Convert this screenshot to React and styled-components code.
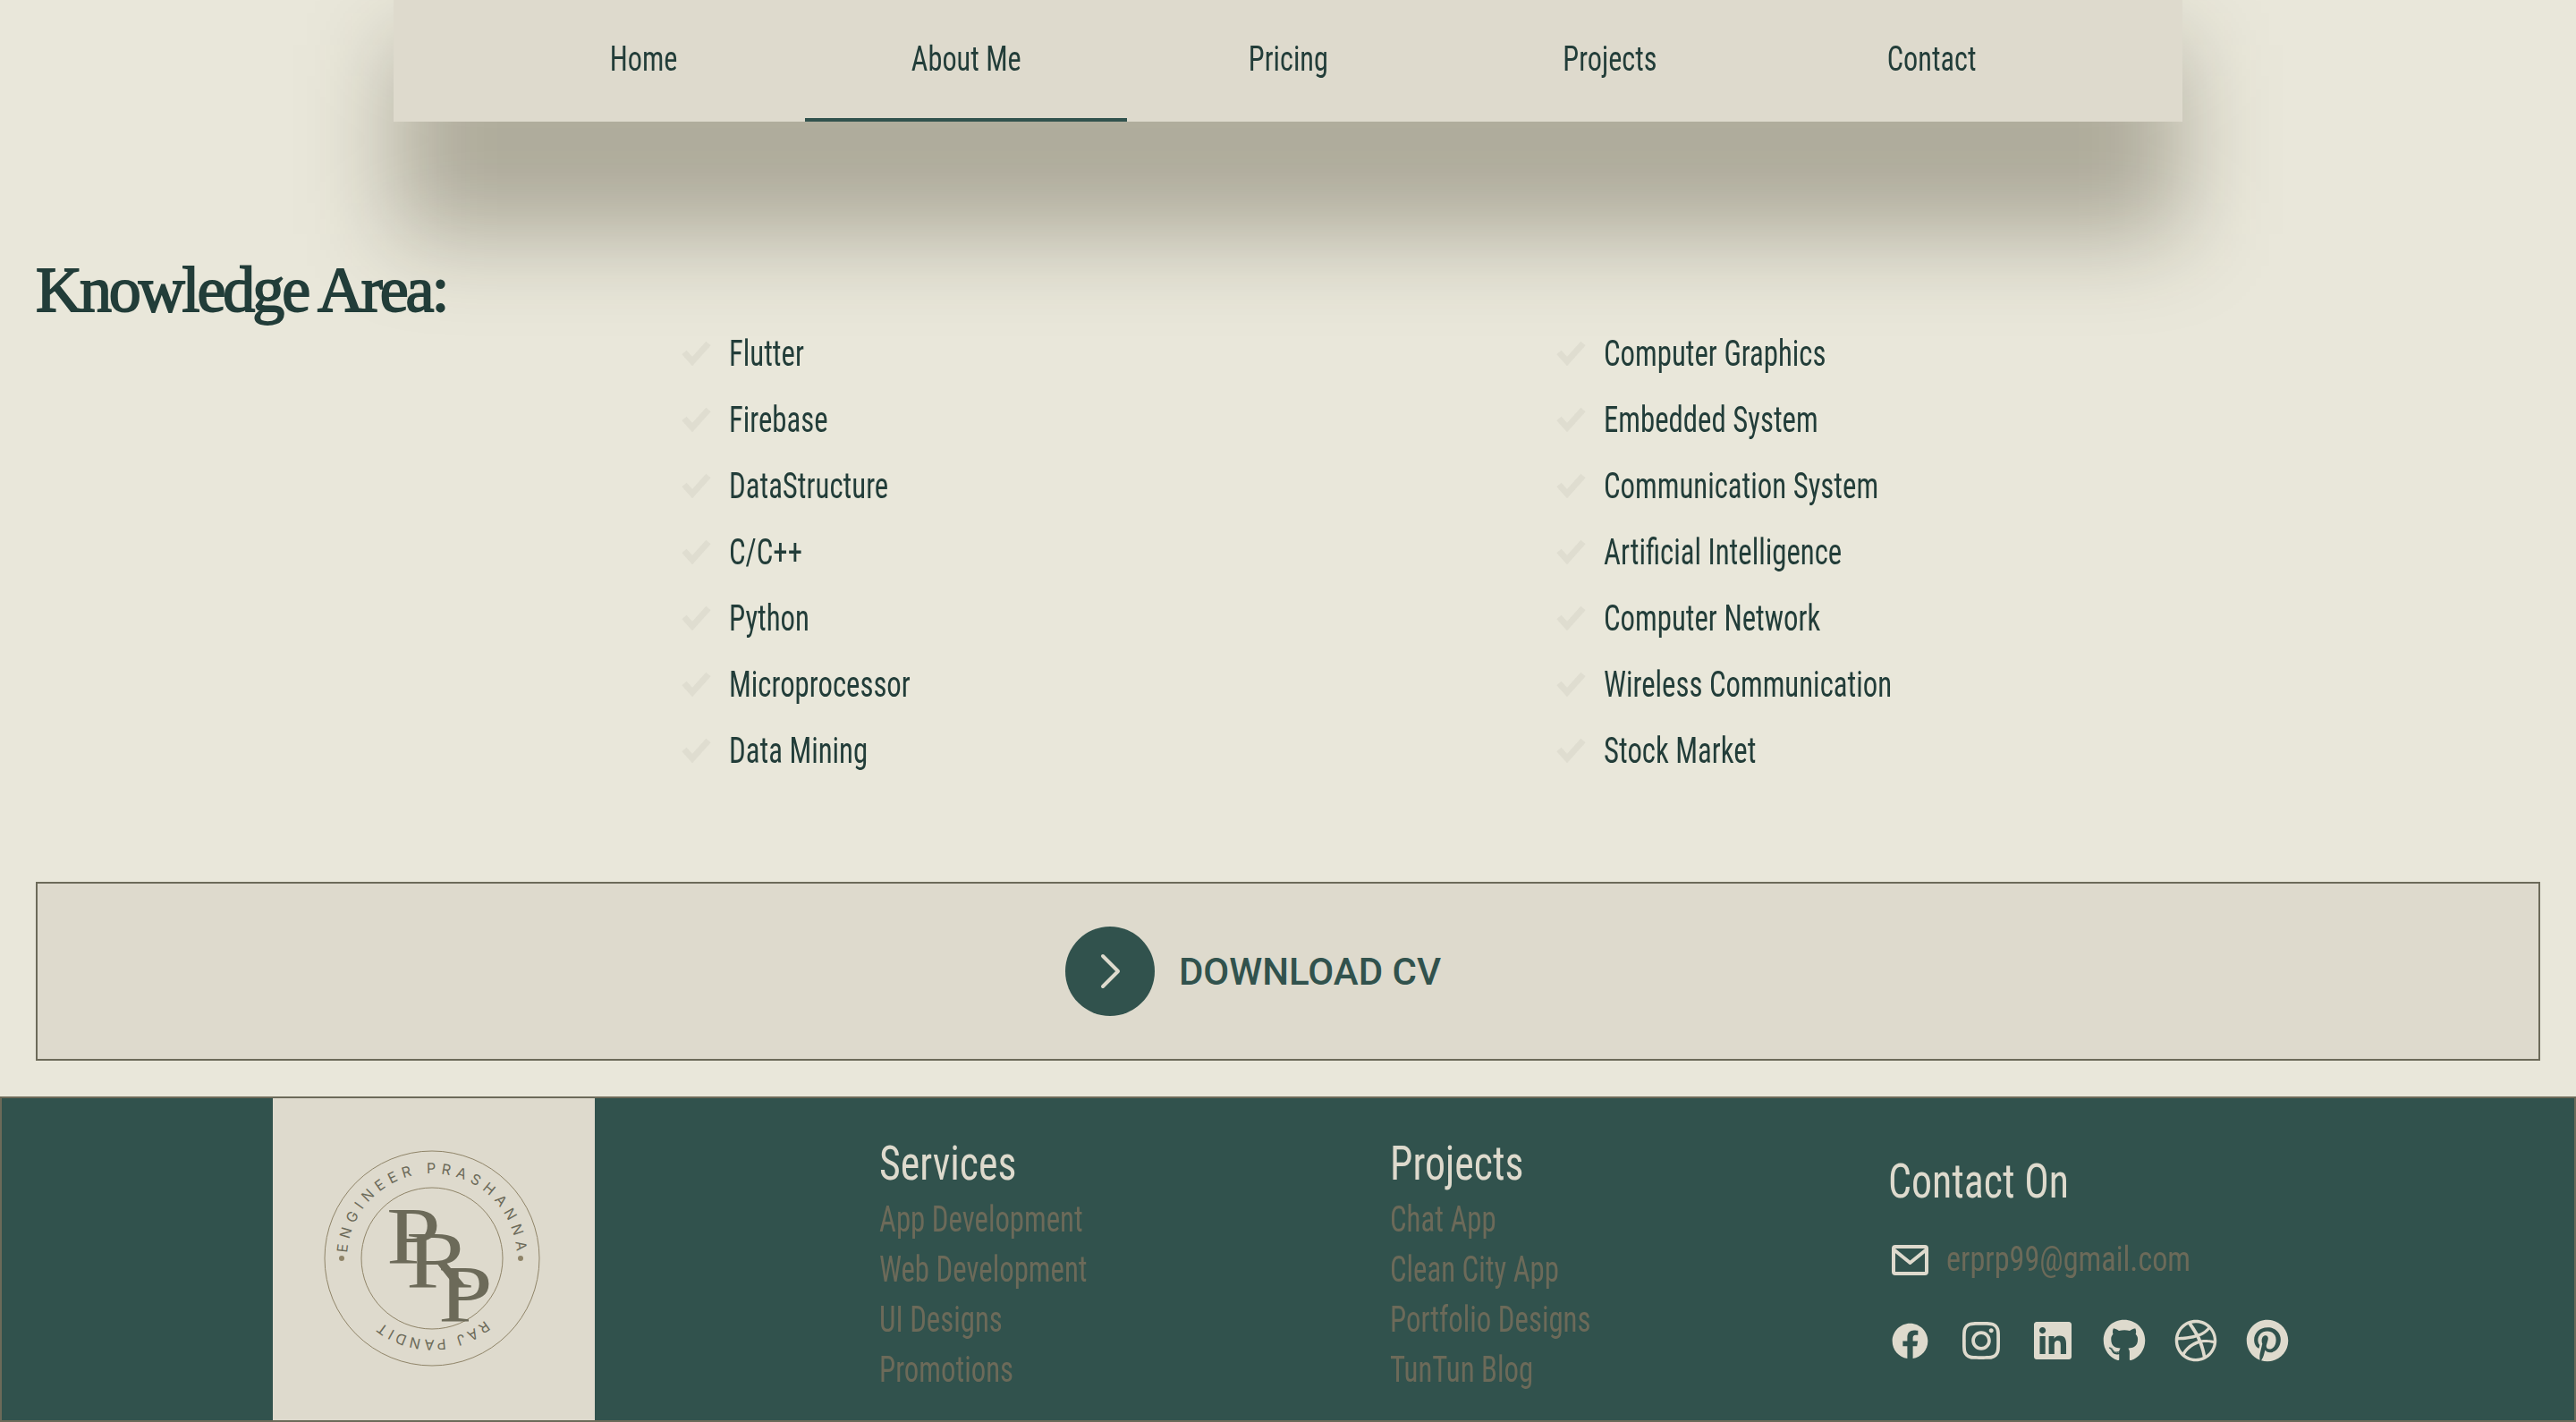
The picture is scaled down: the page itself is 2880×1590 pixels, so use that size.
import styled, { createGlobalStyle } from "styled-components";
import { FaFacebook, FaInstagram, FaLinkedin, FaGithub, FaDribbble, FaPinterest } from "react-icons/fa";

const NAV = ["Home", "About Me", "Pricing", "Projects", "Contact"];
const LEFT = ["Flutter", "Firebase", "DataStructure", "C/C++", "Python", "Microprocessor", "Data Mining"];
const RIGHT = ["Computer Graphics", "Embedded System", "Communication System", "Artificial Intelligence", "Computer Network", "Wireless Communication", "Stock Market"];
const SERVICES = ["App Development", "Web Development", "UI Designs", "Promotions"];
const PROJECTS = ["Chat App", "Clean City App", "Portfolio Designs", "TunTun Blog"];

const Global = createGlobalStyle`
  html { background: #e9e7da; }
  body { margin: 0; font-family: Roboto, sans-serif; font-stretch: 75%; overflow: hidden; }
`;

const Page = styled.div`
  width: 2880px;
  height: 1590px;
  overflow: hidden;
`;

// narrows the condensed face a little more, there is no Oswald here
const Narrow = styled.span`
  display: inline-block;
  white-space: nowrap;
  transform: scaleX(${(p) => p.$x || 0.86});
  transform-origin: ${(p) => p.$origin || "left"} center;
`;

const Nav = styled.nav`
  position: relative;
  display: flex;
  width: 2000px;
  height: 136px;
  margin: 0 auto 144px;
  padding: 0 100px;
  box-sizing: border-box;
  background: #dedacd;

  &::before {
    content: "";
    position: absolute;
    z-index: -1;
    left: 2px;
    right: 2px;
    top: 50px;
    height: 212px;
    background: rgba(36, 31, 5, 0.3);
    filter: blur(52px);
  }
`;

const NavItem = styled.a`
  display: flex;
  align-items: center;
  justify-content: center;
  width: 360px;
  height: 132px;
  font-size: 38px;
  color: #223d39;
  border-bottom: 4px solid ${(p) => (p.$active ? "#31524d" : "transparent")};
`;

const Heading = styled.h2`
  margin: 0 0 -5px 40px;
  height: 78px;
  padding-top: 5px;
  font-family: "Liberation Serif", serif;
  font-stretch: normal;
  font-weight: 400;
  font-size: 72px;
  line-height: 78px;
  letter-spacing: -3.1px;
  -webkit-text-stroke: 1.8px #223d39;
  color: #223d39;
`;

const Lists = styled.div`
  display: grid;
  grid-template-columns: 978px 1fr;
  padding-left: 762px;
  margin-bottom: 110px;
`;

const Row = styled.div`
  display: flex;
  align-items: center;
  gap: 20px;
  height: 74px;
  font-size: 40px;
  color: #223d39;
  svg { width: 33px; height: 28px; color: #dfddd0; flex: none; }
`;

const Download = styled.a`
  display: flex;
  align-items: center;
  justify-content: center;
  gap: 27px;
  height: 200px;
  margin: 0 40px 40px;
  padding-right: 78px;
  box-sizing: border-box;
  background: #dedacd;
  border: 2px solid #6c6a59;
  font-stretch: normal;
  font-weight: 500;
  font-size: 42px;
  color: #31524d;
`;

const Circle = styled.span`
  display: flex;
  align-items: center;
  justify-content: center;
  width: 100px;
  height: 100px;
  border-radius: 50%;
  background: #31524d;
`;

const Footer = styled.footer`
  display: flex;
  height: 364px;
  box-sizing: border-box;
  padding-left: 303px;
  background: #31524d;
  border: 2px solid #6c6a59;
`;

const LogoCol = styled.div`
  width: 678px;
  flex: none;
`;

const LogoBox = styled.div`
  width: 360px;
  height: 360px;
  background: #dedacd;
`;

const Col = styled.div`
  width: ${(p) => p.$w}px;
  flex: none;
  padding-top: 42px;
`;

const ColTitle = styled.div`
  height: 62px;
  margin-bottom: 4px;
  font-size: 54px;
  line-height: 62px;
  color: #dedacd;
`;

const ColLink = styled.div`
  height: 56px;
  font-size: 40px;
  line-height: 56px;
  color: #6c6a59;
`;

const ContactCol = styled.div`
  padding-top: 62px;
`;

const Mail = styled.div`
  display: flex;
  align-items: center;
  gap: 17px;
  height: 48px;
  margin-top: 32px;
  font-size: 38px;
  color: #6c6a59;
`;

const Socials = styled.div`
  display: flex;
  gap: 32px;
  margin-top: 43px;
  color: #dedacd;
`;

const Social = styled.span`
  display: flex;
  align-items: center;
  justify-content: center;
  width: 48px;
  height: 48px;
`;

const logoText = { fontFamily: "Inter, sans-serif", fontSize: 16, fill: "#6c6a59" };
const prpText = { fontFamily: "Liberation Serif, serif", fontSize: 91, fill: "#6c6a59" };

function Logo() {
  return (
    <svg width="360" height="360" viewBox="0 0 360 360">
      <defs>
        <path id="topArc" d="M 83 179 A 95 95 0 0 1 273 179" />
        <path id="botArc" d="M 269 179 A 91 91 0 0 1 87 179" />
      </defs>
      <circle cx="178" cy="179" r="120" fill="none" stroke="#8f8468" strokeWidth="1" />
      <circle cx="178" cy="179" r="79" fill="none" stroke="#8f8468" strokeWidth="1" />
      <circle cx="77" cy="179" r="3" fill="#8f8468" />
      <circle cx="277" cy="179" r="3" fill="#8f8468" />
      <text style={logoText}><textPath href="#topArc" startOffset="6" textLength="284">ENGINEER PRASHANNA</textPath></text>
      <text style={logoText} letterSpacing="3.5"><textPath href="#botArc" startOffset="50%" textAnchor="middle">RAJ PANDIT</textPath></text>
      <text transform="translate(127 185) scale(1.2 1)" style={prpText}>P</text>
      <text transform="translate(149 212) scale(1.2 1)" style={prpText}>R</text>
      <text transform="translate(185 250) scale(1.2 1)" style={prpText}>P</text>
    </svg>
  );
}

export default function App() {
  return (
    <Page>
      <Global />
      <Nav>
        {NAV.map((n) => (
          <NavItem key={n} $active={n === "About Me"}><Narrow $origin="center" $x={0.85}>{n}</Narrow></NavItem>
        ))}
      </Nav>
      <Heading>Knowledge Area:</Heading>
      <Lists>
        {[LEFT, RIGHT].map((list, i) => (
          <div key={i}>
            {list.map((t) => (
              <Row key={t}>
                <svg viewBox="0 0 33 28"><path d="M3 13 L12 23 L30 3" fill="none" stroke="currentColor" strokeWidth="7" /></svg>
                <Narrow $x={0.82}>{t}</Narrow>
              </Row>
            ))}
          </div>
        ))}
      </Lists>
      <Download>
        <Circle>
          <svg width="40" height="50" viewBox="0 0 40 50"><path d="M12 8 L29 25 L12 42" fill="none" stroke="#dedacd" strokeWidth="4" strokeLinecap="round" strokeLinejoin="round" /></svg>
        </Circle>
        DOWNLOAD CV
      </Download>
      <Footer>
        <LogoCol><LogoBox><Logo /></LogoBox></LogoCol>
        <Col $w={571}>
          <ColTitle><Narrow $x={0.85}>Services</Narrow></ColTitle>
          {SERVICES.map((s) => <ColLink key={s}><Narrow $x={0.82}>{s}</Narrow></ColLink>)}
        </Col>
        <Col $w={557}>
          <ColTitle><Narrow $x={0.85}>Projects</Narrow></ColTitle>
          {PROJECTS.map((s) => <ColLink key={s}><Narrow $x={0.82}>{s}</Narrow></ColLink>)}
        </Col>
        <ContactCol>
          <ColTitle><Narrow $x={0.85}>Contact On</Narrow></ColTitle>
          <Mail>
            <svg width="48" height="48" viewBox="0 0 48 48" fill="none" stroke="#dedacd" strokeWidth="4" strokeLinejoin="round">
              <rect x="6" y="10" width="37" height="30" rx="2" />
              <path d="M6 13 L24.5 28 L43 13" />
            </svg>
            <Narrow $x={0.9}>erprp99@gmail.com</Narrow>
          </Mail>
          <Socials>
            <Social><FaFacebook size={41} /></Social>
            <Social><FaInstagram size={48} /></Social>
            <Social><FaLinkedin size={48} /></Social>
            <Social><FaGithub size={48} /></Social>
            <Social><FaDribbble size={48} /></Social>
            <Social><FaPinterest size={48} /></Social>
          </Socials>
        </ContactCol>
      </Footer>
    </Page>
  );
}
